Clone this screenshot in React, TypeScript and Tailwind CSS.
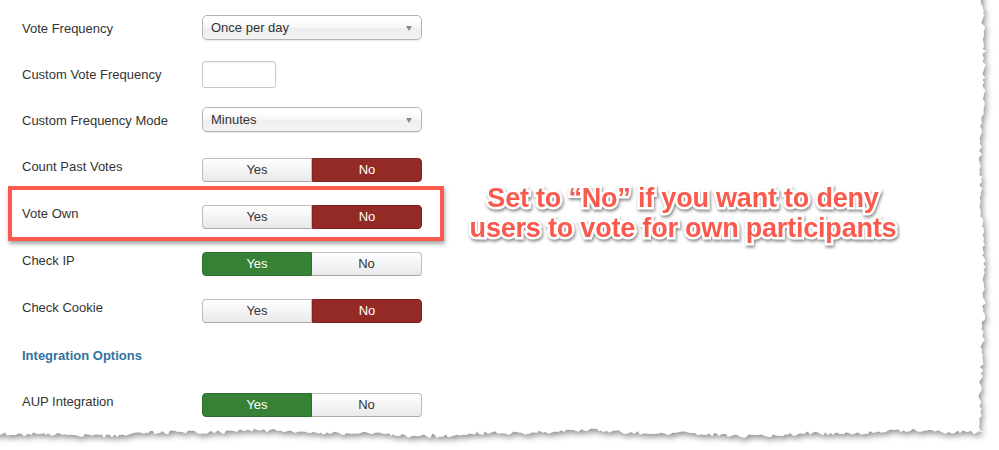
import React from 'react'

function seeded(seed: number) {
  let s = seed
  return () => {
    s = (s * 16807) % 2147483647
    return (s - 1) / 2147483646
  }
}

function tornPath() {
  const rnd = seeded(42)
  const pts: string[] = ['M-20,-20']
  // right edge, top to bottom
  for (let y = -20; y <= 432; y += 2 + Math.floor(rnd() * 3)) {
    const x = 982 + Math.sin(y / 37) * 1.8 + (rnd() - 0.5) * 4
    pts.push(`L${x.toFixed(1)},${y}`)
  }
  // bottom edge, right to left
  for (let x = 984; x >= -20; x -= 2 + Math.floor(rnd() * 3)) {
    const y = 433 + Math.sin(x / 53) * 2.2 + Math.cos(x / 17) * 0.8 + (rnd() - 0.5) * 4
    pts.push(`L${x},${y.toFixed(1)}`)
  }
  pts.push('Z')
  return pts.join(' ')
}

function PaperEdge() {
  return (
    <svg className="absolute inset-0 h-[450px] w-[999px]" width="999" height="450">
      <defs>
        <filter id="torn" x="-5%" y="-5%" width="110%" height="110%">
          <feDropShadow dx="2" dy="3" stdDeviation="3" floodColor="#000" floodOpacity="0.45" />
        </filter>
      </defs>
      <path d={tornPath()} fill="#fff" filter="url(#torn)" />
    </svg>
  )
}

function Select({ value }: { value: string }) {
  return (
    <div className="relative flex h-[25px] w-[220px] items-center rounded-[5px] border border-[#b4b4b4] bg-[linear-gradient(#fff_20%,#f6f6f6_50%,#eee_52%,#f4f4f4)] pl-[8px] text-[13px] text-[#333] shadow-[0_1px_1px_rgba(0,0,0,0.08)]">
      {value}
      <span className="absolute right-[9px] top-[10px] h-0 w-0 border-x-[3.5px] border-t-[5px] border-x-transparent border-t-[#8a8a8a]" />
    </div>
  )
}

function Toggle({ on }: { on: boolean }) {
  const idle =
    'bg-[linear-gradient(#fff,#e9e9e9)] border border-[#bdbdbd] border-b-[#a8a8a8] text-[#333]'
  return (
    <div className="flex h-[24px] w-[220px] text-[13px]">
      <div
        className={[
          'flex w-[110px] items-center justify-center rounded-l-[4px]',
          on ? 'bg-[#378137] border border-[#2e6e2e] text-white' : idle,
        ].join(' ')}
      >
        Yes
      </div>
      <div
        className={[
          'flex w-[110px] items-center justify-center rounded-r-[4px]',
          on ? idle + ' border-l-0' : 'bg-[#942a25] border border-[#7d221e] text-white',
        ].join(' ')}
      >
        No
      </div>
    </div>
  )
}

function Row({ label, children, pt, mt }: { label: string; children: React.ReactNode; pt: string; mt: string }) {
  return (
    <div className={'flex items-start ' + mt}>
      <div className={'w-[202px] pl-[22px] text-[13px] leading-[18px] text-[#333] ' + pt}>{label}</div>
      {children}
    </div>
  )
}

export default function App() {
  return (
    <div className="relative h-[450px] w-[999px] overflow-hidden bg-white font-['Liberation_Sans',Arial,sans-serif]">
      <PaperEdge />

      <div className="relative flex flex-col pt-[15px]">
        <Row label="Vote Frequency" pt="pt-[5px]" mt="">
          <Select value="Once per day" />
        </Row>
        <Row label="Custom Vote Frequency" pt="pt-[5px]" mt="mt-[21px]">
          <div className="h-[27px] w-[74px] rounded-[3px] border border-[#c8c8c8] bg-white shadow-[inset_0_1px_1px_rgba(0,0,0,0.06)]" />
        </Row>
        <Row label="Custom Frequency Mode" pt="pt-[5px]" mt="mt-[19px]">
          <Select value="Minutes" />
        </Row>
        <Row label="Count Past Votes" pt="pt-0" mt="mt-[26px]">
          <Toggle on={false} />
        </Row>
        <Row label="Vote Own" pt="pt-0" mt="mt-[23px]">
          <Toggle on={false} />
        </Row>
        <Row label="Check IP" pt="pt-0" mt="mt-[23px]">
          <Toggle on={true} />
        </Row>
        <Row label="Check Cookie" pt="pt-0" mt="mt-[23px]">
          <Toggle on={false} />
        </Row>
        <div className="mt-[24px] pl-[22px] text-[13px] font-bold leading-[18px] text-[#31729f]">Integration Options</div>
        <Row label="AUP Integration" pt="pt-0" mt="mt-[28px]">
          <Toggle on={true} />
        </Row>
      </div>

      {/* highlight box */}
      <div className="absolute left-[8px] top-[186px] h-[55px] w-[436px] border-[4px] border-[#fb5a4f] shadow-[1px_3px_4px_rgba(0,0,0,0.35)]" />

      {/* callout text */}
      <div className="absolute left-[460px] top-[183px] w-[446px] text-center font-['Liberation_Sans',Arial,sans-serif] text-[27px] font-bold leading-[30px] tracking-[-0.2px] text-[#fa5a4e] [-webkit-text-stroke:5px_white] [paint-order:stroke_fill] drop-shadow-[1px_2px_1.5px_rgba(0,0,0,0.45)]">
        Set to “No” if you want to deny
        <br />
        users to vote for own participants
      </div>
    </div>
  )
}
